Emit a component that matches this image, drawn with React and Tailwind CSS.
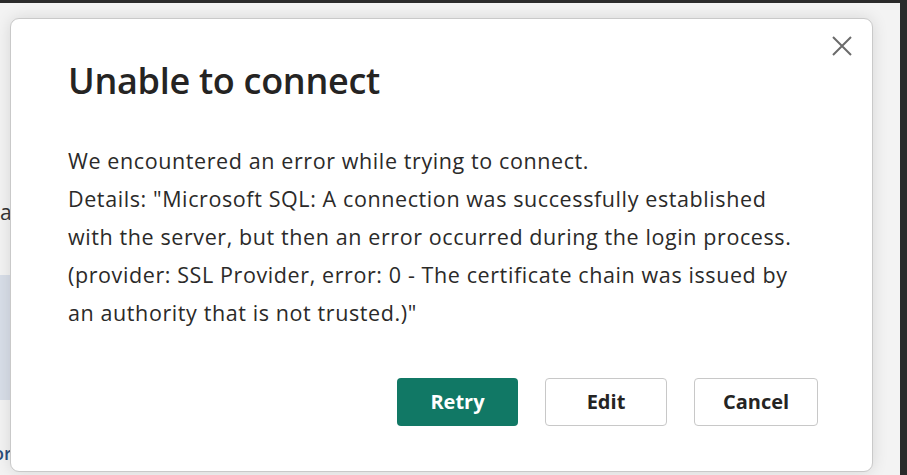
import React from "react";

export default function App() {
  return (
    <div className="relative w-[907px] h-[475px] overflow-hidden bg-[#f3f3f3]" style={{ fontFamily: '"Open Sans", "Noto Sans", sans-serif' }}>
      {/* top dark bar */}
      <div className="absolute left-0 top-0 w-full h-[3px] bg-[#2b2b2b]" />
      {/* right dark strip */}
      <div className="absolute right-0 top-0 h-full w-[7px] bg-[#2b2b2b]" />
      {/* background hints */}
      <div className="absolute left-0 top-[197px] text-[21px] leading-[30px] text-[#333]">a</div>
      <div className="absolute left-0 top-[275px] w-[12px] h-[125px] bg-[#d8dee8]" />
      <div className="absolute left-[-7px] top-[441px] text-[18px] leading-[24px] font-semibold text-[#2a4d7a]">or</div>

      {/* dialog */}
      <div className="absolute left-[10px] top-[18px] w-[863px] h-[454px] bg-white rounded-[9px] border border-[#c9c9c9] shadow-[0_0_16px_rgba(0,0,0,0.12)] flex flex-col pl-[57px] pr-[50px]">
        <button className="absolute right-[18px] top-[15px] w-[24px] h-[24px] flex items-center justify-center">
          <svg width="22" height="22" viewBox="0 0 22 22" fill="none" stroke="#6b6b6b" strokeWidth="2">
            <path d="M2 2 L20 20 M20 2 L2 20" />
          </svg>
        </button>
        <h1 className="mt-[38px] text-[36px] leading-[48px] font-semibold text-[#252423] tracking-[-0.3px]">Unable to connect</h1>
        <div className="mt-[37px] text-[21.5px] leading-[38px] tracking-[0.6px] text-[#2b2a29] whitespace-nowrap">
          <p>We encountered an error while trying to connect.</p>
          <p>
            Details: "Microsoft SQL: A connection was successfully established
            <br />
            with the server, but then an error occurred during the login process.
            <br />
            (provider: SSL Provider, error: 0 - The certificate chain was issued by
            <br />
            an authority that is not trusted.)"
          </p>
        </div>
        <div className="flex justify-end gap-[27px] mt-[46px] pr-[4px]">
          <button className="w-[121px] h-[48px] rounded-[4px] bg-[#117865] text-white text-[20px] font-bold">Retry</button>
          <button className="w-[122px] h-[48px] rounded-[4px] bg-white border border-[#c8c8c8] text-[#252423] text-[20px] font-bold">Edit</button>
          <button className="w-[124px] h-[48px] rounded-[4px] bg-white border border-[#c8c8c8] text-[#252423] text-[20px] font-bold">Cancel</button>
        </div>
      </div>
    </div>
  );
}
